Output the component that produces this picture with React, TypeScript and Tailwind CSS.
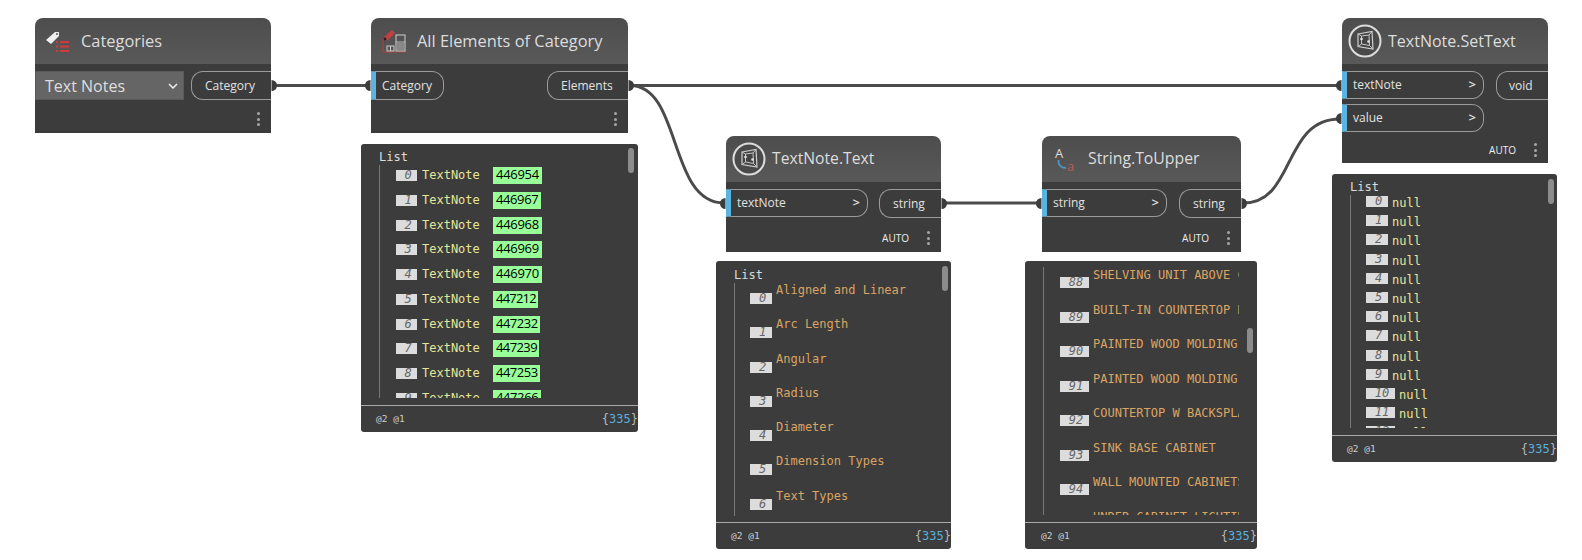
import { ReactNode } from 'react';

const sans = "font-['Open_Sans',sans-serif]";
const mono = "font-['DejaVu_Sans_Mono',monospace]";

function Dots() {
  return (
    <div className="flex flex-col gap-[2.5px]">
      <span className="w-[3px] h-[3px] rounded-full bg-[#a6a6a6]" />
      <span className="w-[3px] h-[3px] rounded-full bg-[#a6a6a6]" />
      <span className="w-[3px] h-[3px] rounded-full bg-[#a6a6a6]" />
    </div>
  );
}

function InPort({ label, chevron, className }: { label: string; chevron?: boolean; className: string }) {
  return (
    <div className={`h-[28px] flex items-center justify-between pl-[6px] pr-[7px] border border-l-[5px] border-l-[#5ab4e2] border-[#9a9a9a] rounded-r-[12px] text-[12px] text-[#e2e2e2] ${className}`}>
      <span>{label}</span>
      {chevron && <span className="text-[13px] font-semibold">&gt;</span>}
    </div>
  );
}

function OutPort({ label, className }: { label: string; className: string }) {
  return (
    <div className={`h-[29px] flex items-center border border-r-0 border-[#9a9a9a] rounded-l-[12px] text-[12px] text-[#e2e2e2] ${className}`}>
      {label}
    </div>
  );
}

function NodeFooter({ auto, className }: { auto?: boolean; className: string }) {
  return (
    <div className={`flex items-center justify-end gap-[18px] pr-[11px] ${className}`}>
      {auto && <span className="text-[10px] text-[#eeeeee]">AUTO</span>}
      <Dots />
    </div>
  );
}

function DynNode({ className, title, titleSize, icon, children }: { className: string; title: string; titleSize: string; icon: ReactNode; children: ReactNode }) {
  return (
    <div className={`absolute ${sans} ${className}`}>
      <div className="h-[46px] flex items-center rounded-t-[8px] bg-linear-to-b from-[#4d4d4d] to-[#595959]">
        <div className="w-[46px] shrink-0 flex justify-center">{icon}</div>
        <span className={`text-[#dddddd] whitespace-nowrap ${titleSize}`}>{title}</span>
      </div>
      <div className="bg-[#3c3c3c]">{children}</div>
    </div>
  );
}

function CategoriesIcon() {
  return (
    <svg width="28" height="24" viewBox="0 0 28 24">
      <path d="M2 11 L11 3 L15 3 L15 7 L7 15 Z" fill="#eeeeee" />
      <circle cx="13" cy="5" r="1" fill="#555" />
      <path d="M12 13h2M16 13h9M12 17.500h2M16 17.500h9M12 22h2M16 22h9" stroke="#cf3a3a" strokeWidth="2" />
    </svg>
  );
}

function ElementsIcon() {
  return (
    <svg width="28" height="26" viewBox="0 0 28 26">
      <path d="M4 9 L12 2 L15 5 L7 13 Z" fill="#c24040" />
      <circle cx="5" cy="11" r="1.4" fill="#222" />
      <path d="M3 11 V24 H26" stroke="#b83c3c" strokeWidth="1" fill="none" />
      <rect x="7" y="18" width="7" height="5" fill="none" stroke="#cccccc" strokeWidth="1" />
      <path d="M10.500 18v5" stroke="#cccccc" />
      <rect x="16" y="7" width="9" height="16" fill="none" stroke="#bbbbbb" strokeWidth="1.2" />
      <rect x="17" y="15" width="7" height="7" fill="#888888" />
      <path d="M16 14h9" stroke="#bbbbbb" />
    </svg>
  );
}

function TextNoteIcon() {
  return (
    <svg width="34" height="34" viewBox="0 0 34 34">
      <circle cx="17" cy="17" r="15.500" fill="#4a4a4a" stroke="#dddddd" strokeWidth="2" />
      <path d="M10 10 L24 7.500 L25 25 L10 22.500 Z" fill="#444444" stroke="#d0d0d0" strokeWidth="1.2" />
      <path d="M13.500 12 L21 11 L21.500 21.500 L13.500 20 Z M10 10 L13.500 12 M10 22.500 L13.500 20 M24 7.500 L21 11 M25 25 L21.500 21.500" fill="none" stroke="#c4c4c4" strokeWidth="1" />
      <circle cx="13.500" cy="15" r="1.300" fill="#e4e4e4" />
      <circle cx="20.500" cy="17.500" r="1.300" fill="#e4e4e4" />
    </svg>
  );
}

function ToUpperIcon() {
  return (
    <svg width="28" height="28" viewBox="0 0 28 28">
      <text x="4" y="13" fontSize="13" fill="#dddddd" fontFamily="Open Sans, sans-serif">A</text>
      <path d="M7.500 15 C7 20 10 23 15 23" fill="none" stroke="#4f93c4" strokeWidth="1.800" />
      <text x="16" y="25.500" fontSize="13" fill="#b85c5c" fontFamily="Open Sans, sans-serif">a</text>
    </svg>
  );
}

function Preview({ className, listClass, lineClass, scrollClass, children, label = true, footPad }: {
  className: string; listClass: string; lineClass: string; scrollClass: string; children: ReactNode; label?: boolean; footPad: string;
}) {
  return (
    <div className={`absolute flex flex-col bg-[#3c3c3c] rounded-[3px] overflow-hidden ${mono} ${className}`}>
      <div className={`relative flex-1 min-h-0 overflow-hidden ${listClass}`}>
        {label && <div className="h-[16px] leading-[16px] text-[12px] text-[#dddddd]">List</div>}
        <div className={`border-l border-[#777777] overflow-hidden ${lineClass}`}>{children}</div>
        <div className={`absolute w-[6px] h-[25px] rounded-[3px] bg-[#8c8c8c] ${scrollClass}`} />
      </div>
      <div className={`h-[27px] shrink-0 flex items-center justify-between border-t border-[#a8a8a8] ${footPad}`}>
        <span className="text-[9.5px] text-[#cccccc]">@2 @1</span>
        <span className="text-[12px] text-[#b8b8b8]">{'{'}<span className="text-[#5bb0dc]">335</span>{'}'}</span>
      </div>
    </div>
  );
}

function Badge({ n, className }: { n: number; className: string }) {
  return (
    <span className={`h-[11px] shrink-0 flex items-center justify-center pl-[3px] bg-[#dcdcdc] text-[12px] leading-[11px] italic text-[#666666] ${className}`}>{n}</span>
  );
}

const ids: [string, string][] = [
  ['446954', 'w-[49px] tracking-[-0.3px]'],
  ['446967', 'w-[48px] tracking-[-0.4px]'],
  ['446968', 'w-[49px] tracking-[-0.3px]'],
  ['446969', 'w-[49px] tracking-[-0.3px]'],
  ['446970', 'w-[49px] tracking-[-0.3px]'],
  ['447212', 'w-[45px] tracking-[-0.8px]'],
  ['447232', 'w-[47px] tracking-[-0.5px]'],
  ['447239', 'w-[46px] tracking-[-0.6px]'],
  ['447253', 'w-[47px] tracking-[-0.5px]'],
  ['447266', 'w-[48px] tracking-[-0.4px]'],
];
const types = ['Aligned and Linear', 'Arc Length', 'Angular', 'Radius', 'Diameter', 'Dimension Types', 'Text Types'];
const uppers: [number, string][] = [
  [88, 'SHELVING UNIT ABOVE COUNTER'],
  [89, 'BUILT-IN COUNTERTOP DISPLAY'],
  [90, 'PAINTED WOOD MOLDING'],
  [91, 'PAINTED WOOD MOLDING'],
  [92, 'COUNTERTOP W BACKSPLASH'],
  [93, 'SINK BASE CABINET'],
  [94, 'WALL MOUNTED CABINETS'],
  [95, 'UNDER CABINET LIGHTING'],
];
const nulls = Array.from({ length: 13 }, (_, i) => i);

function Wires() {
  return (
    <svg className="absolute inset-0" width="1582" height="560">
      <g fill="none" stroke="#4b4b4b" strokeWidth="3">
        <path d="M272 85.500 H370" />
        <path d="M630 85.500 H1340" />
        <path d="M630 85.500 C682 85.500 668 203 724 203" />
        <path d="M942 203 H1040" />
        <path d="M1243 203 C1296 203 1282 119 1340 119" />
      </g>
      <g fill="#3c3c3c">
        <path d="M271.500 80 a5.500 5.500 0 0 1 0 11 Z" />
        <path d="M370.500 80 a5.500 5.500 0 0 0 0 11 Z" />
        <path d="M628.500 80 a5.500 5.500 0 0 1 0 11 Z" />
        <path d="M725.500 198 a5.500 5.500 0 0 0 0 11 Z" />
        <path d="M941.500 198 a5.500 5.500 0 0 1 0 11 Z" />
        <path d="M1041.500 198 a5.500 5.500 0 0 0 0 11 Z" />
        <path d="M1241.500 198 a5.500 5.500 0 0 1 0 11 Z" />
        <path d="M1341.500 80 a5.500 5.500 0 0 0 0 11 Z" />
        <path d="M1341.500 113 a5.500 5.500 0 0 0 0 11 Z" />
      </g>
    </svg>
  );
}

export default function App() {
  return (
    <div className="relative w-[1582px] h-[560px] overflow-hidden bg-white">
      <Wires />

      {/* Categories */}
      <DynNode className="left-[35px] top-[18px] w-[236px]" title="Categories" titleSize="text-[16.4px]" icon={<CategoriesIcon />}>
        <div className="flex items-start justify-between pt-[7px]">
          <div className="w-[149px] h-[29px] flex items-center justify-between pl-[9px] pr-[5px] bg-[#656565] border border-[#5a5a5a] text-[16px] text-[#dedede]">
            <span>Text Notes</span>
            <svg width="10" height="6" viewBox="0 0 10 6"><path d="M1 1 L5 5 L9 1" fill="none" stroke="#eeeeee" strokeWidth="1.500" /></svg>
          </div>
          <OutPort label="Category" className="w-[80px] pl-[13px]" />
        </div>
        <NodeFooter className="h-[33px] pt-[5px]" />
      </DynNode>

      {/* All Elements of Category */}
      <DynNode className="left-[371px] top-[18px] w-[257px]" title="All Elements of Category" titleSize="text-[16.4px]" icon={<ElementsIcon />}>
        <div className="flex items-start justify-between pt-[7px]">
          <InPort label="Category" className="w-[73px] h-[29px]" />
          <OutPort label="Elements" className="w-[81px] pl-[13px]" />
        </div>
        <NodeFooter className="h-[33px] pt-[5px]" />
      </DynNode>

      {/* TextNote.Text */}
      <DynNode className="left-[726px] top-[136px] w-[215px]" title="TextNote.Text" titleSize="text-[15.7px]" icon={<TextNoteIcon />}>
        <div className="flex items-start justify-between pt-[7px]">
          <InPort label="textNote" chevron className="w-[142px]" />
          <OutPort label="string" className="w-[62px] h-[28px] pl-[13px]" />
        </div>
        <NodeFooter auto className="h-[34px] pt-[6px]" />
      </DynNode>

      {/* String.ToUpper */}
      <DynNode className="left-[1042px] top-[136px] w-[199px]" title="String.ToUpper" titleSize="text-[15.8px]" icon={<ToUpperIcon />}>
        <div className="flex items-start justify-between pt-[7px]">
          <InPort label="string" chevron className="w-[125px]" />
          <OutPort label="string" className="w-[62px] h-[28px] pl-[13px]" />
        </div>
        <NodeFooter auto className="h-[34px] pt-[6px]" />
      </DynNode>

      {/* TextNote.SetText */}
      <DynNode className="left-[1342px] top-[18px] w-[206px]" title="TextNote.SetText" titleSize="text-[16px]" icon={<TextNoteIcon />}>
        <div className="flex items-start justify-between pt-[7px]">
          <div className="flex flex-col gap-[5px]">
            <InPort label="textNote" chevron className="w-[142px]" />
            <InPort label="value" chevron className="w-[142px]" />
          </div>
          <OutPort label="void" className="w-[52px] h-[28px] pl-[12px]" />
        </div>
        <NodeFooter auto className="h-[31px] pt-[5px]" />
      </DynNode>

      {/* Previews */}
      <Preview
        className="left-[361px] top-[144px] w-[277px] h-[288px]"
        listClass="pt-[5px] pl-[18px]"
        lineClass="h-[233px] pl-[16px] pt-[2px]"
        scrollClass="left-[267px] top-[4px]"
        footPad="pl-[15px]"
      >
        {ids.map(([id, width], i) => (
          <div key={id} className="h-[24.75px] flex items-start">
            <Badge n={i} className="w-[21px] mt-[3px]" />
            <span className="w-[76px] pl-[5px] leading-[17px] text-[12px] text-[#e6e69a]">TextNote</span>
            <span className={`h-[17px] leading-[15px] pl-[3px] bg-[#99ff99] text-[13px] text-black whitespace-nowrap ${sans} ${width}`}>{id}</span>
          </div>
        ))}
      </Preview>

      <Preview
        className="left-[716px] top-[261px] w-[235px] h-[288px]"
        listClass="pt-[6px] pl-[18px]"
        lineClass="h-[233px] pl-[15px]"
        scrollClass="left-[226px] top-[5px]"
        footPad="pl-[15px]"
      >
        {types.map((t, i) => (
          <div key={t} className="h-[34.3px] flex items-start">
            <Badge n={i} className="w-[22px] mt-[10px]" />
            <span className="pl-[4px] leading-[14px] text-[12px] text-[#dba464]">{t}</span>
          </div>
        ))}
      </Preview>

      <Preview
        label={false}
        className="left-[1025px] top-[261px] w-[232px] h-[288px]"
        listClass="pt-[6px] pl-[18px]"
        lineClass="h-[248px] pl-[16px]"
        scrollClass="left-[222px] top-[67px]"
        footPad="pl-[16px]"
      >
        <div className="w-[179px] overflow-hidden">
          {uppers.map(([n, t]) => (
            <div key={n} className="h-[34.5px] flex items-start">
              <Badge n={n} className="w-[29px] mt-[10px]" />
              <span className="pl-[4px] leading-[16px] whitespace-nowrap text-[12px] text-[#dba464]">{t}</span>
            </div>
          ))}
        </div>
      </Preview>

      <Preview
        className="left-[1332px] top-[174px] w-[225px] h-[288px]"
        listClass="pt-[5px] pl-[18px]"
        lineClass="h-[233px] pl-[15px]"
        scrollClass="left-[216px] top-[5px]"
        footPad="pl-[15px]"
      >
        {nulls.map(i => (
          <div key={i} className="h-[19.2px] flex items-start">
            <Badge n={i} className={i > 9 ? 'w-[29px] mt-[1px]' : 'w-[22px] mt-[1px]'} />
            <span className="pl-[4px] leading-[15px] mt-[1px] text-[12px] text-[#e6e69a]">null</span>
          </div>
        ))}
      </Preview>
    </div>
  );
}
